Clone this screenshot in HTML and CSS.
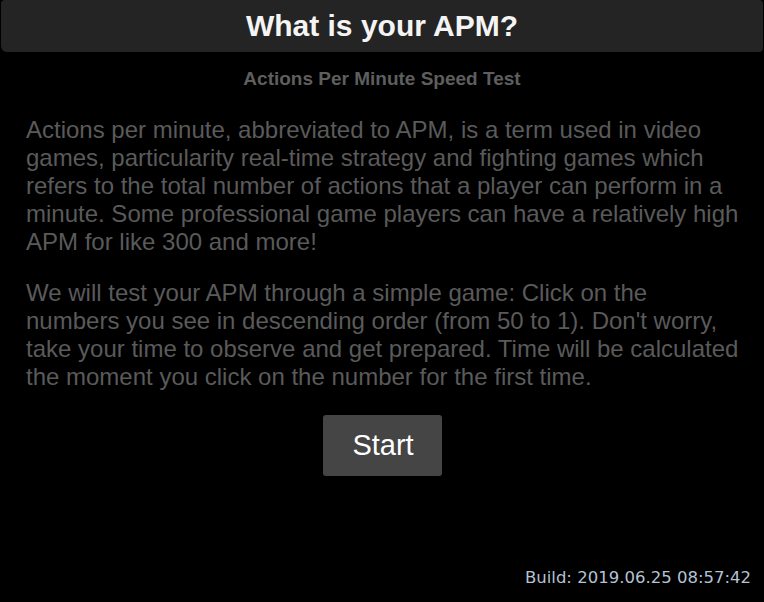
FILE: index.html
```html
<!DOCTYPE html>
<html>
<head>
<meta charset="utf-8">
<link rel="stylesheet" href="styles.css">
</head>
<body>
<div class="page">
  <header class="header"><h1 class="title">What is your APM?</h1></header>
  <h2 class="subtitle">Actions Per Minute Speed Test</h2>
  <div class="content">
    <p class="text">Actions per minute, abbreviated to APM, is a term used in video games, particularity real-time strategy and fighting games which refers to the total number of actions that a player can perform in a minute. Some professional game players can have a relatively high APM for like 300 and more!</p>
    <p class="text">We will test your APM through a simple game: Click on the numbers you see in descending order (from 50 to 1). Don't worry, take your time to observe and get prepared. Time will be calculated the moment you click on the number for the first time.</p>
  </div>
  <div class="actions"><button class="start">Start</button></div>
  <div class="build">Build: 2019.06.25 08:57:42</div>
</div>
</body>
</html>
```
FILE: styles.css
```css
html, body {
  margin: 0;
  padding: 0;
  background: #000;
  height: 100%;
}
.page {
  height: 602px;
  display: flex;
  flex-direction: column;
  font-family: "Liberation Sans", Arial, sans-serif;
}
.header {
  margin: 0 1px;
  height: 52px;
  background: #242424;
  border-radius: 4px 4px 4px 6px;
  display: flex;
  align-items: center;
  justify-content: center;
}
.title {
  margin: 0;
  color: #f4f4f4;
  font-size: 30px;
  font-weight: bold;
}
.subtitle {
  margin: 15px 0 0;
  text-align: center;
  color: #5e5e5e;
  font-size: 19px;
  font-weight: bold;
  line-height: 24px;
}
.content {
  padding: 0 20px 0 26px;
  margin-top: 25px;
}
.text {
  margin: 0 0 23px;
  color: #5a5a5a;
  font-size: 24px;
  line-height: 28px;
}
.actions {
  display: flex;
  justify-content: center;
  margin-top: 1px;
}
.start {
  width: 119px;
  height: 61px;
  background: #454545;
  border: none;
  border-radius: 3px;
  color: #fff;
  font-family: "Liberation Sans", Arial, sans-serif;
  font-size: 29px;
  padding: 0 0 0 2px;
}
.build {
  margin-top: auto;
  margin-bottom: 15px;
  text-align: right;
  padding-right: 13px;
  font-family: "DejaVu Sans", Verdana, sans-serif;
  font-size: 16.5px;
  color: #b4c2d4;
}
```
